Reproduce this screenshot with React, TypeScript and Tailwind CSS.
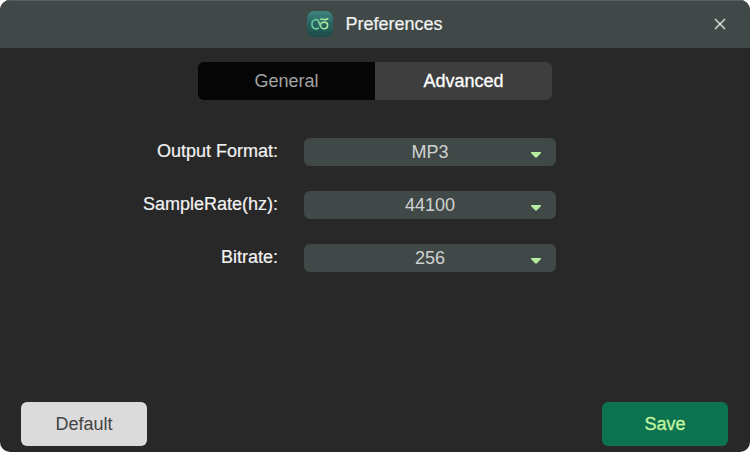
import { useState } from "react";

type Option = {
	id: string;
	label: string;
	values: string[];
	initial: string;
};

const TABS = ["General", "Advanced"];

const OPTIONS: Option[] = [
	{
		id: "format",
		label: "Output Format:",
		values: ["MP3", "AAC", "FLAC", "WAV"],
		initial: "MP3",
	},
	{
		id: "sample-rate",
		label: "SampleRate(hz):",
		values: ["22050", "44100", "48000"],
		initial: "44100",
	},
	{
		id: "bitrate",
		label: "Bitrate:",
		values: ["128", "192", "256", "320"],
		initial: "256",
	},
];

const DEFAULTS = Object.fromEntries(OPTIONS.map((o) => [o.id, o.initial]));

function AppLogo() {
	return (
		<svg viewBox="0 0 26 26" className="size-[26px]" aria-hidden="true">
			<defs>
				<linearGradient id="logo-bg" x1="0" y1="0" x2="0" y2="1">
					<stop offset="0" stopColor="#3f8580" />
					<stop offset="0.5" stopColor="#28645f" />
					<stop offset="1" stopColor="#1c4b49" />
				</linearGradient>
				<linearGradient id="logo-line" x1="0" y1="0" x2="1" y2="0">
					<stop offset="0" stopColor="#62c79b" />
					<stop offset="1" stopColor="#b4e8a0" />
				</linearGradient>
			</defs>
			<rect width="26" height="26" rx="7" fill="url(#logo-bg)" />
			<path
				d="M11.2 17.2C9.4 18.6 4.9 18 4.9 13.3C4.9 10.4 6.8 8.5 9.1 8.5C13.4 8.5 11.8 17.8 16.8 17.8C19 17.8 20.6 16.4 20.6 14.3C20.6 12.3 19 11.1 17 11.1C14.9 11.1 13.6 12.5 13.6 14.6M13.4 8.4C15 7.6 16.2 8.6 17.8 8.6C19.2 8.6 20 8.3 20.8 7.8"
				fill="none"
				stroke="url(#logo-line)"
				strokeWidth="1.6"
				strokeLinecap="round"
			/>
		</svg>
	);
}

type OptionRowProps = {
	option: Option;
	value: string;
	onChange: (value: string) => void;
};

function OptionRow({ option, value, onChange }: OptionRowProps) {
	return (
		<div className="grid grid-cols-[278fr_472fr]">
			<label
				htmlFor={option.id}
				className="text-right leading-[26px] text-[#f2f2f2] [-webkit-text-stroke:0.2px_#f2f2f2]"
			>
				{option.label}
			</label>
			<div className="relative ml-[26px] w-[252px]">
				<select
					id={option.id}
					value={value}
					onChange={(e) => onChange(e.target.value)}
					className="block h-7 w-full appearance-none rounded-md bg-[#414948] text-center text-[#cfd1d1] [text-align-last:center]"
				>
					{option.values.map((v) => (
						<option key={v}>{v}</option>
					))}
				</select>
				<svg
					viewBox="0 0 10 6"
					className="pointer-events-none absolute top-3.5 right-[15px] h-1.5 w-2.5"
					aria-hidden="true"
				>
					<path d="M0 0H10V1L6 5.2Q5 6 4 5.2L0 1Z" fill="#b3eda0" />
				</svg>
			</div>
		</div>
	);
}

export default function App() {
	const [tab, setTab] = useState("Advanced");
	const [values, setValues] = useState<Record<string, string>>(DEFAULTS);

	return (
		<div className="min-h-screen flex bg-white pb-px font-['Liberation_Sans',Arial,sans-serif] text-lg">
			<main className="flex flex-1 flex-col overflow-hidden rounded-[10px] bg-[#282828]">
				<header className="relative flex h-12 items-center justify-center gap-3 border-t border-[#596160] bg-[#414948] pb-0.5 text-[#f2f2f2]">
					<AppLogo />
					<h1 className="[-webkit-text-stroke:0.2px_#f2f2f2]">Preferences</h1>
					<button
						type="button"
						aria-label="Close"
						className="absolute right-6 flex size-3 items-center justify-center"
					>
						<svg viewBox="0 0 12 12" className="size-3" aria-hidden="true">
							<path d="M1 1L11 11M11 1L1 11" stroke="#e6e8e8" strokeWidth="1.3" />
						</svg>
					</button>
				</header>

				<div
					role="tablist"
					className="mx-auto mt-3.5 grid h-[38px] w-[354px] grid-cols-2 overflow-hidden rounded-md"
				>
					{TABS.map((name) => (
						<button
							key={name}
							type="button"
							role="tab"
							aria-selected={tab === name}
							onClick={() => setTab(name)}
							className={
								tab === name
									? "bg-[#3e3e3e] text-white [-webkit-text-stroke:0.3px_white]"
									: "bg-[#050505] text-[#a3a3a3]"
							}
						>
							{name}
						</button>
					))}
				</div>

				<div className="mt-[38px] flex flex-col gap-[25px]">
					{OPTIONS.map((option) => (
						<OptionRow
							key={option.id}
							option={option}
							value={values[option.id]}
							onChange={(v) => setValues({ ...values, [option.id]: v })}
						/>
					))}
				</div>

				<footer className="mt-auto flex justify-between px-[22px] pb-1.5 pl-[21px]">
					<button
						type="button"
						onClick={() => setValues(DEFAULTS)}
						className="h-11 w-[126px] rounded-md bg-[#dbdbdb] text-[#444444]"
					>
						Default
					</button>
					<button
						type="button"
						className="h-11 w-[126px] rounded-md bg-[#0c724f] text-[#c5f5a0] [-webkit-text-stroke:0.3px_#c5f5a0]"
					>
						Save
					</button>
				</footer>
			</main>
		</div>
	);
}
